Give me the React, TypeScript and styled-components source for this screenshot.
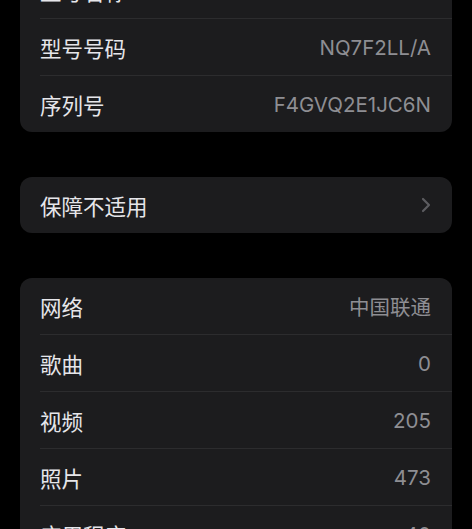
import React from 'react';
import styled, { createGlobalStyle } from 'styled-components';

const GlobalStyle = createGlobalStyle`
  html, body {
    margin: 0;
    padding: 0;
    background: #000000;
  }
  body {
    font-family: Inter, "Noto Sans CJK SC", sans-serif;
    overflow: hidden;
  }
`;

const Page = styled.div`
  width: 472px;
  height: 529px;
  overflow: hidden;
  background: #000000;
  padding: 0 20px;
  box-sizing: border-box;
`;

const List = styled.div`
  margin-top: -38px;
  display: flex;
  flex-direction: column;
  gap: 45px;
`;

const Card = styled.div`
  background: #1c1c1e;
  border-radius: 12px;
  overflow: hidden;
`;

const Row = styled.div`
  display: flex;
  align-items: center;
  justify-content: space-between;
  height: 56px;
  margin-left: 20px;
  padding-right: 21px;
  border-bottom: 1px solid #2c2c2e;

  &:last-child {
    border-bottom: none;
  }
`;

const Label = styled.span`
  font-size: 21.5px;
  color: #e6e6ea;
  letter-spacing: 0;
`;

const Value = styled.span`
  font-size: 20.5px;
  color: #8e8e93;
`;

const Chevron = () => (
  <svg width="10" height="16" viewBox="0 0 10 16" fill="none">
    <polyline
      points="2,2 8,8 2,14"
      stroke="#5c5c60"
      strokeWidth="2.2"
      strokeLinecap="round"
      strokeLinejoin="round"
    />
  </svg>
);

const deviceRows = [
  { label: '型号名称', value: 'iPhone 14' },
  { label: '型号号码', value: 'NQ7F2LL/A' },
  { label: '序列号', value: 'F4GVQ2E1JC6N' },
];

const mediaRows = [
  { label: '网络', value: '中国联通' },
  { label: '歌曲', value: '0' },
  { label: '视频', value: '205' },
  { label: '照片', value: '473' },
  { label: '应用程序', value: '40' },
];

export default function App() {
  return (
    <Page>
      <GlobalStyle />
      <List>
        <Card>
          {deviceRows.map((r) => (
            <Row key={r.label}>
              <Label>{r.label}</Label>
              <Value>{r.value}</Value>
            </Row>
          ))}
        </Card>
        <Card>
          <Row>
            <Label>保障不适用</Label>
            <Chevron />
          </Row>
        </Card>
        <Card>
          {mediaRows.map((r) => (
            <Row key={r.label}>
              <Label>{r.label}</Label>
              <Value>{r.value}</Value>
            </Row>
          ))}
        </Card>
      </List>
    </Page>
  );
}
